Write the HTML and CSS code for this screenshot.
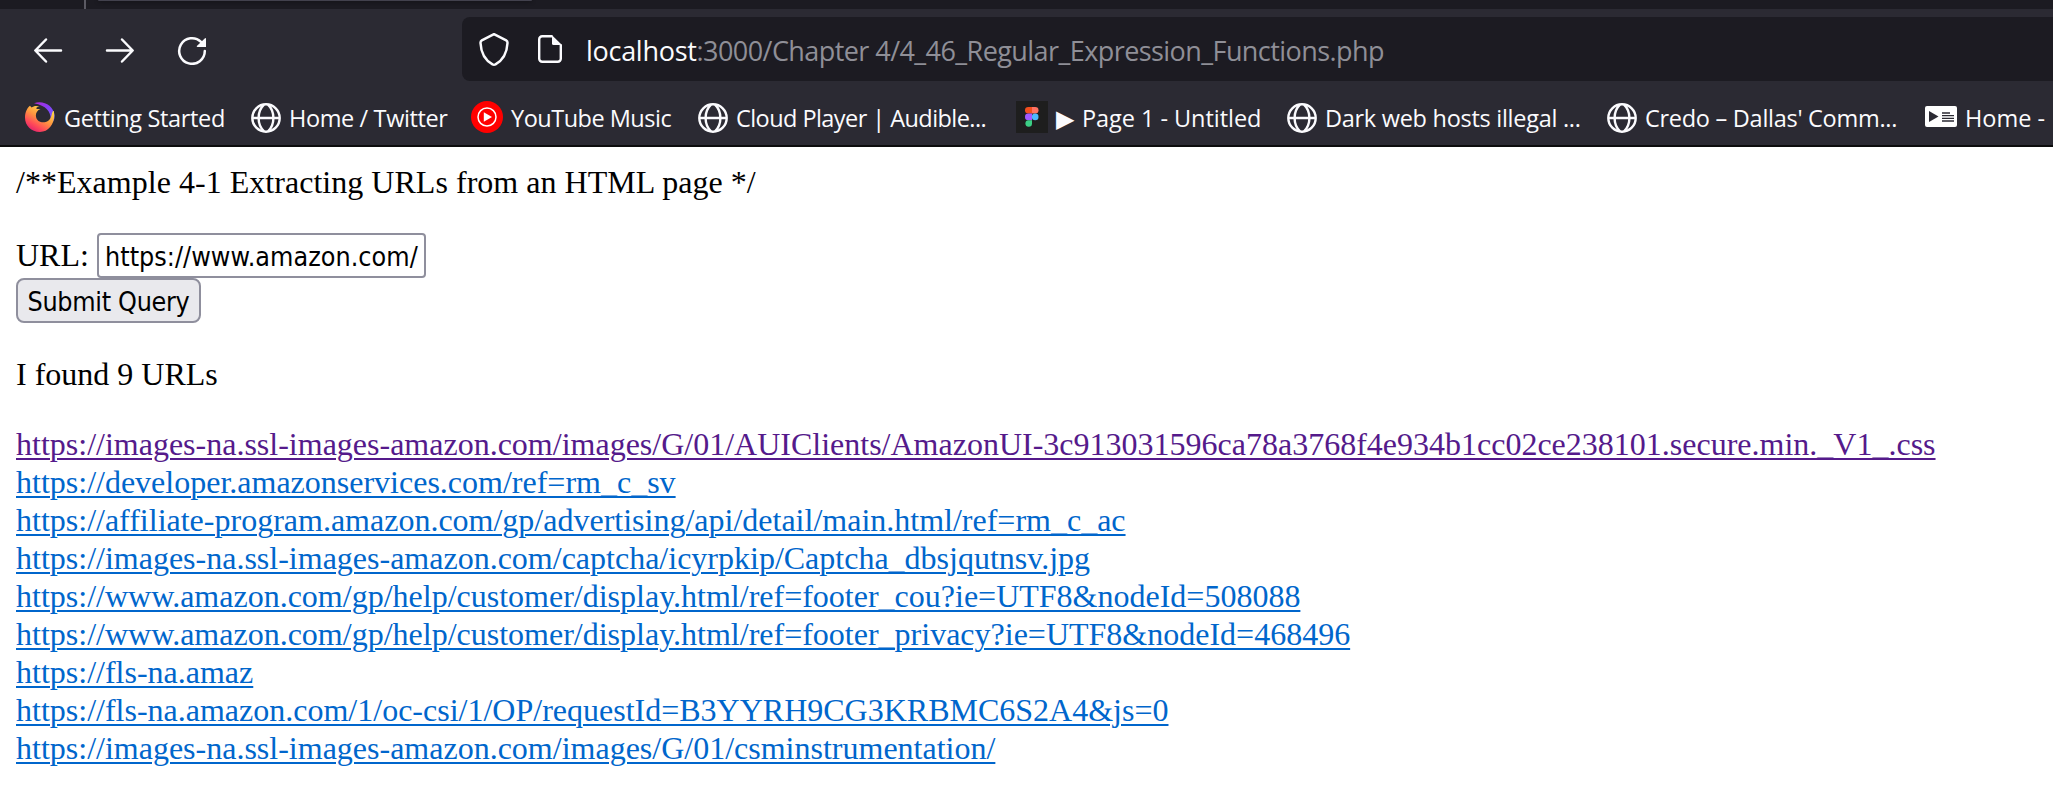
FILE: index.html
```
<!DOCTYPE html>
<html lang="en">
<head>
<meta charset="utf-8">
<title>Regular Expression Functions</title>
<link rel="stylesheet" href="styles.css">
</head>
<body>
<svg class="defs" width="0" height="0" aria-hidden="true">
  <defs>
    <symbol id="globe" viewBox="0 0 30 30">
      <g fill="none" stroke="#fbfbfe" stroke-width="2.4">
        <circle cx="15" cy="15" r="13.7"/>
        <path d="M1.5 15H28.500M13 1.600C5.800 8.500 5.800 21.500 13 28.400M17 1.600C24.200 8.500 24.200 21.500 17 28.400"/>
      </g>
    </symbol>
    <linearGradient id="flame" x1="0.85" y1="0.1" x2="0.25" y2="1">
      <stop offset="0" stop-color="#ffe14a"/><stop offset="0.45" stop-color="#ff9640"/><stop offset="0.75" stop-color="#ff4a58"/><stop offset="1" stop-color="#e01f70"/>
    </linearGradient>
    <linearGradient id="violet" x1="0" y1="0" x2="1" y2="0.8">
      <stop offset="0" stop-color="#b22ad0"/><stop offset="0.5" stop-color="#8a3cf5"/><stop offset="1" stop-color="#6f62ff"/>
    </linearGradient>
  </defs>
</svg>
<header class="chrome">
  <div class="tabstrip"><div class="tab-divider"></div><div class="tab"></div></div>
  <div class="toolbar">
    <nav class="nav">
      <svg width="32" height="32" viewBox="0 0 32 32" fill="none" stroke="#fbfbfe" stroke-width="2.5" stroke-linecap="round" stroke-linejoin="round"><path d="M29 17.500H3.500M14 6.500L3.300 17.500L14 28.500"/></svg>
      <svg width="32" height="32" viewBox="0 0 32 32" fill="none" stroke="#fbfbfe" stroke-width="2.5" stroke-linecap="round" stroke-linejoin="round"><path d="M3 17.500H28.500M18 6.500L28.700 17.500L18 28.500"/></svg>
      <svg width="32" height="32" viewBox="0 0 32 32"><path d="M28.800 18A12.800 12.800 0 1 1 25 8.900" fill="none" stroke="#fbfbfe" stroke-width="2.500" stroke-linecap="round"/><path d="M29 5.300q1-.7 1 .6V14H21.600q-1.700 0-.5-1.200z" fill="#fbfbfe"/></svg>
    </nav>
    <div class="urlbar">
      <svg width="32" height="34" viewBox="0 0 32 34"><path d="M16 2.200L28.200 8.400Q29.600 9.200 29.500 11C29 20.500 24.500 28.500 17.500 32.300Q16 33 14.500 32.300C7.500 28.500 3 20.500 2.500 11Q2.400 9.200 3.800 8.400Z" fill="none" stroke="#fbfbfe" stroke-width="2.500" stroke-linejoin="round"/></svg>
      <svg class="doc" width="24" height="28" viewBox="0 0 24 28"><path d="M14.500 1.200H4.200a3 3 0 0 0-3 3V23.800a3 3 0 0 0 3 3H19.800a3 3 0 0 0 3-3V9.500" fill="none" stroke="#fbfbfe" stroke-width="2.400"/><path d="M14 0.200L24 10H15.500Q14 10 14 8.500Z" fill="#fbfbfe"/></svg>
      <div class="address"><span class="host">localhost</span><span class="path">:3000/Chapter 4/4_46_Regular_Expression_Functions.php</span></div>
    </div>
  </div>
  <div class="bookmarks">
    <div class="bm"><svg width="30" height="30" viewBox="0 0 30 30"><path d="M9 1.200C18-2 28.500 3 29.600 13.500C29.800 19 27 21.500 25 20C27 13 24 4 9 1.200Z" fill="url(#violet)"/><path d="M14.500 4.500C10.500 5 9.500 7.500 15.500 7C10 9 9.500 16 13.500 19C18 22 25 20 26.500 13.500C27 10.500 28 8.500 28.800 9C31 20 24.500 30 15 30C6 30 0 23.500 0 15.500C0 10 2.500 5.500 5 3.800L6.500 5.500C8.500 3.900 11.500 3.500 14.500 4.500Z" fill="url(#flame)"/></svg><span class="t-start">Getting Started</span></div>
    <div class="bm"><svg class="globe" width="30" height="30"><use href="#globe"/></svg><span class="t-home">Home / Twitter</span></div>
    <div class="bm"><svg width="32" height="32" viewBox="0 0 32 32"><circle cx="16" cy="16" r="16" fill="#f00"/><circle cx="16" cy="16" r="9" fill="none" stroke="#fff" stroke-width="1.500"/><path d="M12.800 11.200L21 16L12.800 20.800Z" fill="#fff"/></svg><span class="t-music">YouTube Music</span></div>
    <div class="bm"><svg class="globe" width="30" height="30"><use href="#globe"/></svg><span class="t-cloud">Cloud Player | Audible...</span></div>
    <div class="bm"><svg width="32" height="32" viewBox="0 0 32 32"><path d="M0 0H32V32H0Z" fill="#1e1e1e"/><path d="M16 6H12.300a3.300 3.300 0 0 0 0 6.600H16Z" fill="#f24e1e"/><path d="M16 6h3.200a3.300 3.300 0 0 1 0 6.600H16Z" fill="#ff7262"/><path d="M16 12.600H12.300a3.300 3.300 0 0 0 0 6.600H16Z" fill="#a259ff"/><circle cx="19.200" cy="15.900" r="3.300" fill="#4bb8fe"/><path d="M16 19.200H12.300a3.300 3.300 0 1 0 3.700 3.300Z" fill="#3bcf85"/></svg><span class="t-page"><span class="play">▶</span> Page 1 - Untitled</span></div>
    <div class="bm"><svg class="globe" width="30" height="30"><use href="#globe"/></svg><span class="t-dark">Dark web hosts illegal ...</span></div>
    <div class="bm"><svg class="globe" width="30" height="30"><use href="#globe"/></svg><span class="t-dark">Credo – Dallas' Comm...</span></div>
    <div class="bm"><svg width="32" height="22" viewBox="0 0 32 22"><rect width="32" height="21" rx="2" fill="#fff"/><path d="M4 5L13.500 10.500L4 16Z" fill="#2b2a33"/><path d="M17 7H25M17 9.700H29M17 12.300H29M17 15H29" stroke="#2b2a33" stroke-width="1.300"/></svg><span>Home -</span></div>
  </div>
</header>
<main class="page">
  <p class="title">/**Example 4-1 Extracting URLs from an HTML page */</p>
  <form class="query" onsubmit="return false">
    <div class="field"><label for="url">URL:</label><input id="url" class="url" type="text" value="https://www.amazon.com/"></div>
    <button class="submit" type="submit">Submit Query</button>
  </form>
  <p>I found 9 URLs</p>
  <p class="links">
    <a class="visited" href="#">https://images-na.ssl-images-amazon.com/images/G/01/AUIClients/AmazonUI-3c913031596ca78a3768f4e934b1cc02ce238101.secure.min._V1_.css</a><br>
    <a href="#">https://developer.amazonservices.com/ref=rm_c_sv</a><br>
    <a href="#">https://affiliate-program.amazon.com/gp/advertising/api/detail/main.html/ref=rm_c_ac</a><br>
    <a href="#">https://images-na.ssl-images-amazon.com/captcha/icyrpkip/Captcha_dbsjqutnsv.jpg</a><br>
    <a href="#">https://www.amazon.com/gp/help/customer/display.html/ref=footer_cou?ie=UTF8&amp;nodeId=508088</a><br>
    <a href="#">https://www.amazon.com/gp/help/customer/display.html/ref=footer_privacy?ie=UTF8&amp;nodeId=468496</a><br>
    <a href="#">https://fls-na.amaz</a><br>
    <a href="#">https://fls-na.amazon.com/1/oc-csi/1/OP/requestId=B3YYRH9CG3KRBMC6S2A4&amp;js=0</a><br>
    <a href="#">https://images-na.ssl-images-amazon.com/images/G/01/csminstrumentation/</a>
  </p>
</main>
</body>
</html>
```
FILE: styles.css
```
* { box-sizing: border-box; }
body { margin: 0; height: 801px; overflow: hidden; background: #fff; color: #000; }
svg { display: block; flex: none; }
.defs { position: absolute; }

/* Browser chrome */
.chrome { height: 147px; background: #2b2a33; border-bottom: 2px solid #0c0c0d; color: #fbfbfe; font-family: "Open Sans", "Noto Sans", sans-serif; }
.tabstrip { display: flex; height: 9px; background: #1c1b22; }
.tab-divider { width: 2px; margin-left: 84px; background: #5b5a63; }
.tab { width: 434px; height: 1px; margin-left: 12px; background: #42414d; box-shadow: 0 0 4px #000; border-radius: 0 0 4px 4px; }
.toolbar { display: flex; height: 80px; padding-top: 8px; }
.nav { display: flex; flex: none; gap: 40px; width: 462px; padding: 16px 0 0 32px; }
.urlbar { display: flex; flex: 1; align-items: center; height: 64px; padding-left: 16px; background: #1c1b22; border-radius: 8px 0 0 8px; }
.doc { margin: 0 24px 0 28px; }
.address { font-size: 27px; line-height: 40px; padding-top: 4px; white-space: pre; }
.host { letter-spacing: -0.28px; }
.path { letter-spacing: -0.57px; color: #8f8f97; }
.bookmarks { display: grid; grid-template-columns: 226px 220px 227px 318px 271px 320px 318px 128px; height: 56px; padding-left: 25px; }
.bm { display: flex; align-items: center; gap: 8px; font-size: 23.5px; line-height: 32px; white-space: pre; overflow: hidden; }
.bm > span { padding-top: 2px; }
.globe { position: relative; top: 1px; }
.t-start { padding-left: 1px; letter-spacing: -0.34px; }
.t-home { letter-spacing: -0.38px; }
.t-music { letter-spacing: -0.5px; }
.t-cloud { letter-spacing: -0.56px; }
.t-page { letter-spacing: -0.05px; }
.play { margin-right: 2px; }
.t-dark { letter-spacing: -0.28px; }

/* Document */
.page { padding: 16px; font: 32px/38px "Liberation Serif", "Times New Roman", serif; }
.page p { margin: 0 0 32px; white-space: nowrap; }
.page .title { letter-spacing: 0.03px; }
.query { margin-bottom: 32px; }
.field { display: flex; align-items: flex-start; height: 45px; }
.field label { width: 81px; padding-top: 3px; }
.url, .submit { height: 45px; margin: 0; border: 2px solid #8f8f9d; color: #000; font-family: "DejaVu Sans Condensed", "DejaVu Sans", sans-serif; font-stretch: condensed; font-size: 26.67px; }
.url { width: 329px; padding: 2px 0 0 6px; border-radius: 4px; background: #fff; letter-spacing: 0.03px; }
.submit { display: block; width: 185px; padding: 1px 0 0; border-radius: 8px; background: #e9e9ed; letter-spacing: -0.3px; }
.links a { color: #0066cc; text-decoration: underline; text-decoration-thickness: 2px; text-underline-offset: 3px; }
.links a.visited { color: #551a8b; }
```
